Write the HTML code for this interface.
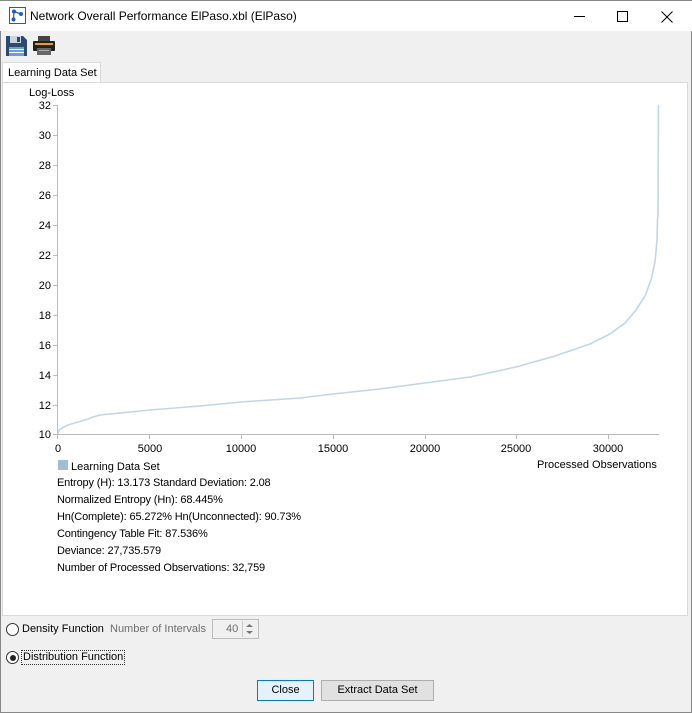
<!DOCTYPE html>
<html><head><meta charset="utf-8">
<style>
*{margin:0;padding:0;box-sizing:border-box}
body{width:692px;height:713px;overflow:hidden;background:#f0f0f0;font-family:"Liberation Sans",Arial,sans-serif;font-size:11px;color:#000;position:relative}
.win{position:absolute;left:0;top:0;width:692px;height:713px;border:1px solid #888;border-top:none}
.title{position:absolute;left:0;top:0;width:692px;height:31px;background:#fff;border-top:1px solid #888}
.title .t{position:absolute;left:30px;top:8px;font-size:12px}
.abs{position:absolute}
.panel{position:absolute;left:2px;top:82px;width:686px;height:534px;background:#fff;border:1px solid #d9d9d9}
.tab{position:absolute;left:2px;top:62px;width:99px;height:21px;background:#fff;border:1px solid #d9d9d9;border-bottom:none;padding:4px 0 0 5px;font-size:11px}
.stat{position:absolute;left:57px;font-size:11px;letter-spacing:-0.15px}
.btn{position:absolute;top:680px;height:21px;border:1px solid #adadad;background:#e1e1e1;text-align:center;font-size:11px;line-height:19px}
</style></head><body>
<div class="win"></div>
<div class="title">
<svg class="abs" style="left:9px;top:6px" width="17" height="17" viewBox="0 0 17 17"><rect x="0.5" y="0.5" width="16" height="16" fill="#fff" stroke="#1e5fb4"/><circle cx="5" cy="4.5" r="2" fill="#1e5fb4"/><circle cx="12" cy="7" r="2" fill="#1e5fb4"/><circle cx="4.5" cy="12.5" r="2" fill="#1e5fb4"/><path d="M5 4.5L12 7M5 4.5L4.5 12.5" stroke="#1e5fb4" stroke-width="1.2"/></svg>
<div class="t">Network Overall Performance ElPaso.xbl (ElPaso)</div>
<div class="abs" style="left:574px;top:15px;width:11px;height:1px;background:#000"></div>
<div class="abs" style="left:617px;top:10px;width:11px;height:11px;border:1px solid #000"></div>
<svg class="abs" style="left:661px;top:10px" width="12" height="12"><path d="M0.5 0.5L11.5 11.5M11.5 0.5L0.5 11.5" stroke="#000"/></svg>
</div>
<svg class="abs" style="left:6px;top:35px" width="21" height="21" viewBox="0 0 21 21"><path d="M0 1h17l4 4v16H0z" fill="#2c4a6e"/><rect x="4" y="1" width="11" height="7" fill="#c8d4e0"/><rect x="11" y="2" width="3" height="5" fill="#2c4a6e"/><rect x="3" y="12" width="15" height="9" fill="#6aa0d8"/><rect x="3" y="14" width="15" height="1" fill="#fff"/><rect x="3" y="17" width="15" height="1" fill="#fff"/></svg>
<svg class="abs" style="left:33px;top:36px" width="22" height="20" viewBox="0 0 22 20"><rect x="5" y="0" width="12" height="6" fill="#444"/><rect x="0" y="5" width="22" height="10" rx="1" fill="#222"/><rect x="2" y="7" width="18" height="2" fill="#e6a020"/><rect x="4" y="12" width="14" height="7" fill="#666"/><rect x="6" y="14" width="10" height="1" fill="#aaa"/></svg>
<div class="tab">Learning Data Set</div>
<div class="panel"></div>
<svg class="abs" style="left:0;top:0" width="692" height="480" font-family="Liberation Sans,Arial,sans-serif" font-size="11">
<text x="29" y="96">Log-Loss</text>
<g stroke="#bbb" fill="none"><path d="M57.5 105V434.5H659"/>
<path d="M53 105.5h4M53 135.5h4M53 165.5h4M53 195.5h4M53 225.5h4M53 255.5h4M53 285.5h4M53 315.5h4M53 345.5h4M53 375.5h4M53 405.5h4M53 434.5h4"/>
<path d="M57.5 434v5M149.5 434v5M241.5 434v5M333.5 434v5M425.5 434v5M516.5 434v5M608.5 434v5"/></g>
<g text-anchor="end"><text x="51" y="109">32</text><text x="51" y="139">30</text><text x="51" y="169">28</text><text x="51" y="199">26</text><text x="51" y="229">24</text><text x="51" y="259">22</text><text x="51" y="289">20</text><text x="51" y="319">18</text><text x="51" y="349">16</text><text x="51" y="379">14</text><text x="51" y="409">12</text><text x="51" y="438">10</text></g>
<g text-anchor="middle"><text x="58" y="452">0</text><text x="150" y="452">5000</text><text x="241" y="452">10000</text><text x="333" y="452">15000</text><text x="425" y="452">20000</text><text x="516" y="452">25000</text><text x="608" y="452">30000</text></g>
<path d="M58 434L59 430L62 428L68 425L78 422L88 419L93 417L100 415L150 410L200 406L241 402L300 398L333 394L380 389L425 383L470 377L516 367L555 356L590 344L610 334L625 323L636 310L645 296L651 280L655 262L657 240L657.5 220L658 215L658.5 105" fill="none" stroke="#c3d6e2" stroke-width="1.6"/>
<rect x="58" y="460" width="10" height="10" fill="#a3bdd2"/>
<text x="71" y="470">Learning Data Set</text>
<text x="537" y="468">Processed Observations</text>
</svg>
<div class="stat" style="top:477px">Entropy (H): 13.173 Standard Deviation: 2.08</div>
<div class="stat" style="top:494px">Normalized Entropy (Hn): 68.445%</div>
<div class="stat" style="top:511px">Hn(Complete): 65.272% Hn(Unconnected): 90.73%</div>
<div class="stat" style="top:528px">Contingency Table Fit: 87.536%</div>
<div class="stat" style="top:545px">Deviance: 27,735.579</div>
<div class="stat" style="top:562px">Number of Processed Observations: 32,759</div>
<div class="abs" style="left:6px;top:623px;width:13px;height:13px;border:1px solid #333;border-radius:50%;background:#fff"></div>
<div class="abs" style="left:22px;top:623px">Density Function</div>
<div class="abs" style="left:110px;top:623px;color:#6d6d6d">Number of Intervals</div>
<div class="abs" style="left:212px;top:619px;width:47px;height:20px;border:1px solid #bcbcbc;background:#f0f0f0"></div>
<div class="abs" style="left:226px;top:623px;color:#6d6d6d">40</div>
<div class="abs" style="left:242px;top:621px;width:15px;height:16px;border-left:1px solid #ccc"></div>
<svg class="abs" style="left:245px;top:622px" width="9" height="14"><path d="M1 5L4.5 2L8 5z M1 9L4.5 12L8 9z" fill="#777"/></svg>
<div class="abs" style="left:6px;top:651px;width:13px;height:13px;border:1px solid #333;border-radius:50%;background:#fff"></div>
<div class="abs" style="left:9.5px;top:654.5px;width:6px;height:6px;border-radius:50%;background:#222"></div>
<div class="abs" style="left:21px;top:650px;border:1px dotted #333;padding:0 1px;line-height:13px">Distribution Function</div>
<div class="btn" style="left:257px;width:57px;border-color:#0078d7;background:#e5f1fb">Close</div>
<div class="btn" style="left:321px;width:113px">Extract Data Set</div>
</body></html>
